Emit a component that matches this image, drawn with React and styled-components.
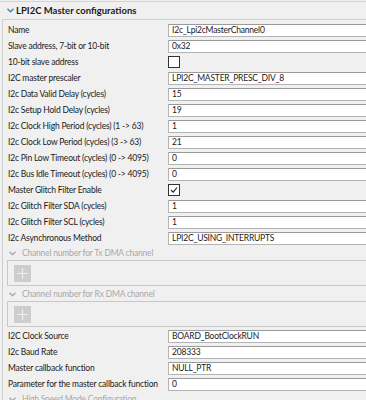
import React from "react";
import styled, { createGlobalStyle } from "styled-components";

const GlobalStyle = createGlobalStyle`
  html, body {
    margin: 0;
    padding: 0;
    background: #f0f0f0;
    overflow: hidden;
  }
  body {
    font-family: Lato, "Open Sans", "Liberation Sans", sans-serif;
    font-size: 8.5px;
    letter-spacing: -0.2px;
    color: #1a1a1a;
  }
`;

const Page = styled.div`
  width: 372px;
  height: 400px;
  overflow: hidden;
  margin-top: 1px;
  border-top: 1px solid #d4d4d4;
`;

const SectionHeader = styled.div`
  height: 17px;
  display: flex;
  align-items: center;
  gap: 2px;
  padding-left: 7px;
  font-weight: 700;
  font-size: 9.5px;
  letter-spacing: 0;
  color: #1a1a1a;
`;

const SubHeader = styled.div`
  height: 14px;
  display: flex;
  align-items: center;
  gap: 6px;
  padding-left: 6px;
  color: #a8a8a8;
`;

const GroupBox = styled.div`
  margin-left: 2px;
  border-left: 1px solid #d0d0d0;
  border-top: 1px solid #d0d0d0;
  padding-top: 2px;
`;

const Row = styled.div`
  display: grid;
  grid-template-columns: 165px 1fr;
  height: 16px;
  align-items: center;
`;

const Label = styled.div`
  padding-left: 5px;
  white-space: nowrap;
  overflow: hidden;
`;

const Field = styled.div`
  height: 11px;
  line-height: 11px;
  background: #ffffff;
  border: 1px solid #b4b4b4;
  border-top-color: #9a9a9a;
  padding: 0 3px;
  white-space: nowrap;
`;

const Check = styled.div`
  width: 10px;
  height: 10px;
  border: 1px solid #333;
  background: #fff;
  display: flex;
  align-items: center;
  justify-content: center;
`;

const DmaBox = styled.div`
  margin: 0 0 1px 4px;
  height: 24px;
  border: 1px solid #c8c8c8;
  border-right: none;
  display: flex;
  align-items: center;
  padding-left: 6px;
`;

const AddButton = styled.div`
  width: 17px;
  height: 17px;
  background: #cdcdcd;
  display: flex;
  align-items: center;
  justify-content: center;
`;

const Chevron = ({ color }) => (
  <svg width="7" height="5" viewBox="0 0 7 5">
    <path d="M0.5 0.8 L3.5 3.8 L6.5 0.8" fill="none" stroke={color} strokeWidth="1.3" />
  </svg>
);

const rows1 = [
  ["Name", "I2c_Lpi2cMasterChannel0"],
  ["Slave address, 7-bit or 10-bit", "0x32"],
  ["10-bit slave address", false],
  ["I2C master prescaler", "LPI2C_MASTER_PRESC_DIV_8"],
  ["I2c Data Valid Delay (cycles)", "15"],
  ["I2c Setup Hold Delay (cycles)", "19"],
  ["I2c Clock High Period (cycles) (1 -> 63)", "1"],
  ["I2c Clock Low Period (cycles) (3 -> 63)", "21"],
  ["I2c Pin Low Timeout (cycles) (0 -> 4095)", "0"],
  ["I2c Bus Idle Timeout (cycles) (0 -> 4095)", "0"],
  ["Master Glitch Filter Enable", true],
  ["I2c Glitch Filter SDA (cycles)", "1"],
  ["I2c Glitch Filter SCL (cycles)", "1"],
  ["I2c Asynchronous Method", "LPI2C_USING_INTERRUPTS"],
];

const rows2 = [
  ["I2C Clock Source", "BOARD_BootClockRUN"],
  ["I2c Baud Rate", "208333"],
  ["Master callback function", "NULL_PTR"],
  ["Parameter for the master callback function", "0"],
];

function PropRow({ label, value }) {
  return (
    <Row>
      <Label>{label}</Label>
      {typeof value === "boolean" ? (
        <Check>
          {value && (
            <svg width="8" height="8" viewBox="0 0 8 8">
              <path d="M1 4 L3.2 6.2 L7 1.5" fill="none" stroke="#222" strokeWidth="1.1" />
            </svg>
          )}
        </Check>
      ) : (
        <Field>{value}</Field>
      )}
    </Row>
  );
}

function Dma({ title }) {
  return (
    <>
      <SubHeader>
        <Chevron color="#a8a8a8" />
        {title}
      </SubHeader>
      <DmaBox>
        <AddButton>
          <svg width="11" height="11" viewBox="0 0 11 11">
            <path d="M5.5 0 V11 M0 5.5 H11" stroke="#eeeeee" strokeWidth="1.2" />
          </svg>
        </AddButton>
      </DmaBox>
    </>
  );
}

export default function App() {
  return (
    <Page>
      <GlobalStyle />
      <SectionHeader>
        <Chevron color="#2f86b8" />
        LPI2C Master configurations
      </SectionHeader>
      <GroupBox>
        {rows1.map(([l, v]) => (
          <PropRow key={l} label={l} value={v} />
        ))}
        <Dma title="Channel number for Tx DMA channel" />
        <Dma title="Channel number for Rx DMA channel" />
        {rows2.map(([l, v]) => (
          <PropRow key={l} label={l} value={v} />
        ))}
        <SubHeader>
          <Chevron color="#a8a8a8" />
          High Speed Mode Configuration
        </SubHeader>
      </GroupBox>
    </Page>
  );
}
